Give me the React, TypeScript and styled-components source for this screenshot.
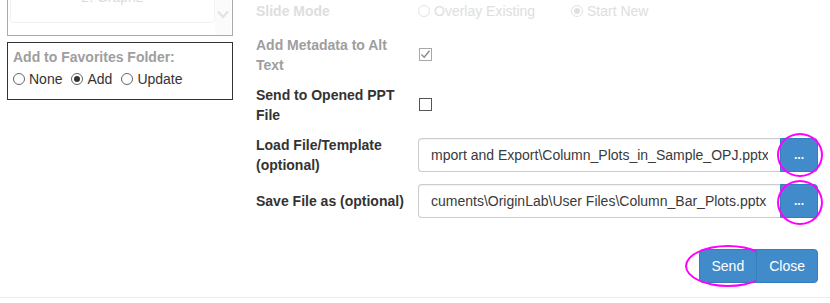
import React from 'react';
import styled, { createGlobalStyle } from 'styled-components';

const Global = createGlobalStyle`
  html, body { margin: 0; padding: 0; background: #fff; }
  body {
    font-family: "Liberation Sans", Arial, sans-serif;
    font-size: 14px;
    line-height: 20px;
    color: #333;
  }
  * { box-sizing: border-box; }
`;

type Tone = 'faint' | 'muted' | 'normal';
const toneColor = (t: Tone) => (t === 'faint' ? '#dedede' : t === 'muted' ? '#9e9e9e' : '#333');

const Page = styled.div`
  width: 830px;
  height: 303px;
  overflow: hidden;
  display: flex;
  flex-direction: column;
`;

const Main = styled.div`
  height: 297px;
  display: flex;
  padding: 0 12px 0 7px;
`;

const Footer = styled.div`
  flex: 1;
  border-top: 1px solid #ececec;
`;

const LeftColumn = styled.div`
  width: 226px;
  margin-right: 23px;
  display: flex;
  flex-direction: column;
`;

const SourceBox = styled.div`
  height: 36px;
  border: 1px solid #aaa;
  border-top: none;
  display: flex;
  padding: 0 1px;
  overflow: hidden;
`;

const SourceSelect = styled.div`
  flex: 1;
  height: 23px;
  border: 1px solid #f2f2f2;
  border-top: none;
  border-radius: 0 0 4px 4px;
  margin-left: 1px;
  overflow: hidden;
`;

const SourceText = styled.div`
  margin-top: -13px;
  text-align: center;
  color: #dcdcdc;
  line-height: 20px;
`;

const Chevron = styled.div`
  width: 16px;
  background: #fbfbfb;
  display: flex;
  justify-content: center;
  padding-top: 10px;
`;

const FavBox = styled.div`
  margin-top: 6px;
  height: 58px;
  border: 1px solid #333;
  padding: 4px 5px;
`;

const FavTitle = styled.div`
  font-weight: bold;
  color: #9e9e9e;
`;

const RadioRow = styled.div`
  display: flex;
  align-items: center;
  margin-top: 2px;
`;

const RadioLabel = styled.label<{ $tone: Tone; $width?: number }>`
  display: inline-flex;
  align-items: center;
  gap: 4px;
  margin-right: 9px;
  color: ${(p) => toneColor(p.$tone)};
  ${(p) => (p.$width ? `width: ${p.$width}px; margin-right: 0;` : '')}
`;

const RadioCircle = styled.span<{ $checked?: boolean; $tone: Tone }>`
  width: 12px;
  height: 12px;
  border-radius: 50%;
  border: 1px solid ${(p) => (p.$tone === 'faint' ? '#e2e2e2' : '#666')};
  display: inline-flex;
  align-items: center;
  justify-content: center;
  flex: none;
  &::after {
    content: '';
    display: ${(p) => (p.$checked ? 'block' : 'none')};
    width: 6px;
    height: 6px;
    border-radius: 50%;
    background: ${(p) => (p.$tone === 'faint' ? '#e0e0e0' : '#333')};
  }
`;

const RightColumn = styled.div`
  flex: 1;
  display: flex;
  flex-direction: column;
`;

const Row = styled.div<{ $top: number; $h: number }>`
  display: grid;
  grid-template-columns: 162px 1fr;
  align-items: center;
  margin-top: ${(p) => p.$top}px;
  height: ${(p) => p.$h}px;
`;

const Label = styled.div<{ $tone: Tone }>`
  width: 150px;
  font-weight: bold;
  color: ${(p) => toneColor(p.$tone)};
`;

const Controls = styled.div`
  display: flex;
  align-items: center;
`;

const CheckBox = styled.span<{ $tone: Tone }>`
  width: 13px;
  height: 13px;
  border: 1px solid ${(p) => (p.$tone === 'muted' ? '#a8a8a8' : '#555')};
  display: inline-flex;
  align-items: center;
  justify-content: center;
  margin-left: 1px;
  margin-top: -1px;
`;

const InputGroup = styled.div`
  display: flex;
  height: 34px;
  width: 100%;
`;

const TextInput = styled.input`
  flex: 1;
  min-width: 0;
  height: 34px;
  border: 1px solid #ccc;
  border-right: none;
  border-radius: 4px 0 0 4px;
  padding: 6px 12px;
  font: inherit;
  color: #3a3a3a;
  background: #fff;
  outline: none;
  box-shadow: inset 0 1px 1px rgba(0, 0, 0, 0.05);
`;

const BrowseButton = styled.button`
  position: relative;
  width: 38px;
  height: 34px;
  border: 1px solid #357ebd;
  border-radius: 0 4px 4px 0;
  background: #428bca;
  color: #fff;
  font: inherit;
  font-weight: bold;
  font-size: 12px;
  padding: 0;
`;

const Ring = styled.span<{ $l: number; $t: number; $w: number; $h: number }>`
  position: absolute;
  left: ${(p) => p.$l}px;
  top: ${(p) => p.$t}px;
  width: ${(p) => p.$w}px;
  height: ${(p) => p.$h}px;
  border: 2px solid #f0f;
  border-radius: 50%;
  pointer-events: none;
`;

const Actions = styled.div`
  margin-top: 31px;
  display: flex;
  justify-content: flex-end;
`;

const ActionButton = styled.button<{ $pos: 'first' | 'last' }>`
  position: relative;
  height: 34px;
  padding: 6px 12px;
  font: inherit;
  color: #fff;
  background: #428bca;
  border: 1px solid #357ebd;
  border-radius: ${(p) => (p.$pos === 'first' ? '4px 0 0 4px' : '0 4px 4px 0')};
  ${(p) => (p.$pos === 'last' ? 'margin-left: -1px;' : '')}
`;

const Check = ({ color }: { color: string }) => (
  <svg width="11" height="11" viewBox="0 0 11 11">
    <polyline points="1.5,5.5 4.2,8.3 9.5,1.8" fill="none" stroke={color} strokeWidth="1.4" />
  </svg>
);

const Radio = ({ label, checked, tone, width }: { label: string; checked?: boolean; tone: Tone; width?: number }) => (
  <RadioLabel $tone={tone} $width={width}>
    <RadioCircle $checked={checked} $tone={tone} />
    {label}
  </RadioLabel>
);

export default function App() {
  return (
    <Page>
      <Global />
      <Main>
        <LeftColumn>
          <SourceBox>
            <SourceSelect>
              <SourceText>2: Graph2</SourceText>
            </SourceSelect>
            <Chevron>
              <svg width="12" height="9" viewBox="0 0 12 9">
                <polyline points="1,1.5 6,7 11,1.5" fill="none" stroke="#e2e2e2" strokeWidth="2" />
              </svg>
            </Chevron>
          </SourceBox>
          <FavBox>
            <FavTitle>Add to Favorites Folder:</FavTitle>
            <RadioRow>
              <Radio label="None" tone="normal" />
              <Radio label="Add" tone="normal" checked />
              <Radio label="Update" tone="normal" />
            </RadioRow>
          </FavBox>
        </LeftColumn>

        <RightColumn>
          <Row $top={1} $h={20}>
            <Label $tone="faint">Slide Mode</Label>
            <Controls>
              <Radio label="Overlay Existing" tone="faint" width={153} />
              <Radio label="Start New" tone="faint" checked />
            </Controls>
          </Row>
          <Row $top={14} $h={40}>
            <Label $tone="muted">Add Metadata to Alt Text</Label>
            <Controls>
              <CheckBox $tone="muted">
                <Check color="#8a8a8a" />
              </CheckBox>
            </Controls>
          </Row>
          <Row $top={10} $h={40}>
            <Label $tone="normal">Send to Opened PPT File</Label>
            <Controls>
              <CheckBox $tone="normal" />
            </Controls>
          </Row>
          <Row $top={10} $h={40}>
            <Label $tone="normal">Load File/Template (optional)</Label>
            <InputGroup>
              <TextInput readOnly value="mport and Export\Column_Plots_in_Sample_OPJ.pptx" />
              <BrowseButton>
                ...
                <Ring $l={-4} $t={-6} $w={46} $h={44} />
              </BrowseButton>
            </InputGroup>
          </Row>
          <Row $top={9} $h={34}>
            <Label $tone="normal">Save File as (optional)</Label>
            <InputGroup>
              <TextInput readOnly value="cuments\OriginLab\User Files\Column_Bar_Plots.pptx" />
              <BrowseButton>
                ...
                <Ring $l={-4} $t={-5} $w={46} $h={45} />
              </BrowseButton>
            </InputGroup>
          </Row>
          <Actions>
            <ActionButton $pos="first">
              Send
              <Ring $l={-15} $t={-5} $w={86} $h={42} />
            </ActionButton>
            <ActionButton $pos="last">Close</ActionButton>
          </Actions>
        </RightColumn>
      </Main>
      <Footer />
    </Page>
  );
}
